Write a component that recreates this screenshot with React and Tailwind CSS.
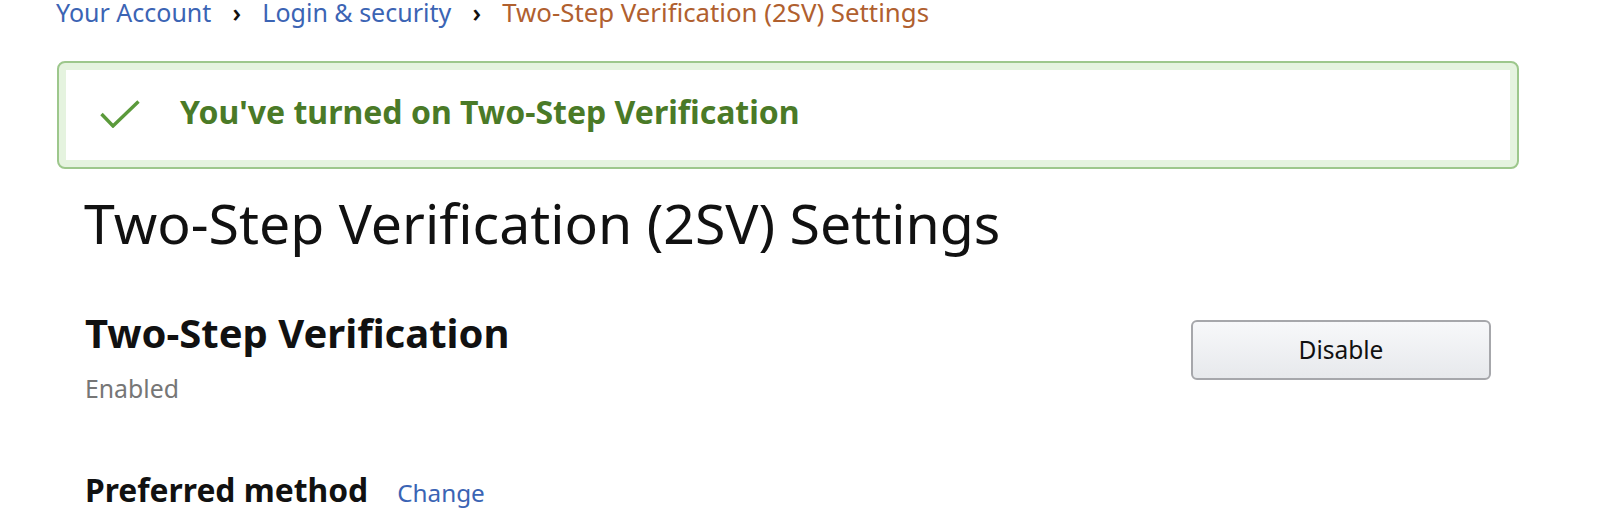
import React from "react";

function Chevron() {
  return (
    <span className="w-[51px] text-center text-[#111111] font-semibold">›</span>
  );
}

export default function App() {
  return (
    <div className="min-h-[512px] bg-white font-['Noto_Sans',sans-serif] text-[#111111]">
      <div className="ml-[57px] w-[1462px]">
        {/* Breadcrumb */}
        <div className="flex items-baseline text-[25px] leading-[25px] -ml-px">
          <span className="text-[#3b64b4]">Your Account</span>
          <Chevron />
          <span className="text-[#3b64b4]">Login &amp; security</span>
          <Chevron />
          <span className="text-[25.8px] text-[#b0602f]">Two-Step Verification (2SV) Settings</span>
        </div>

        {/* Success alert */}
        <div className="mt-[36px] rounded-[8px] border-2 border-[#9dc78c] bg-[#e5f3df] p-[7px]">
          <div className="flex items-start bg-white pt-[22px] pb-[28px]">
            <svg
              className="ml-[34px] mt-[8px] shrink-0"
              width="40"
              height="28"
              viewBox="0 0 40 28"
              fill="none"
            >
              <polyline
                points="1.5,14 13,26 38.5,1.5"
                stroke="#5b9a3b"
                strokeWidth="3.4"
                strokeLinecap="butt"
                strokeLinejoin="miter"
              />
            </svg>
            <span className="ml-[40px] text-[32px] leading-[40px] font-bold text-[#4a7a27]">
              You've turned on Two-Step Verification
            </span>
          </div>
        </div>

        {/* Content */}
        <div className="px-[28px]">
          <h1 className="mt-[22px] text-[55.4px] leading-[64px] font-normal -ml-px">
            Two-Step Verification (2SV) Settings
          </h1>

          <div className="mt-[54px] flex items-start justify-between">
            <div>
              <h2 className="text-[40px] leading-[48px] font-bold">Two-Step Verification</h2>
              <div className="mt-[16px] text-[24.8px] leading-[30px] text-[#767676]">Enabled</div>
            </div>
            <button className="mt-[11px] h-[60px] w-[300px] rounded-[6px] border-2 border-[#a6a7ab] bg-gradient-to-b from-[#f7f8fa] to-[#e7e9ec] text-[24.5px] leading-[30px] text-[#111111]">
              Disable
            </button>
          </div>

          <div className="mt-[67px] flex items-baseline gap-[29px]">
            <h3 className="text-[31.8px] leading-[40px] font-bold">Preferred method</h3>
            <span className="text-[24.3px] text-[#3b64b4]">Change</span>
          </div>
        </div>
      </div>
    </div>
  );
}
